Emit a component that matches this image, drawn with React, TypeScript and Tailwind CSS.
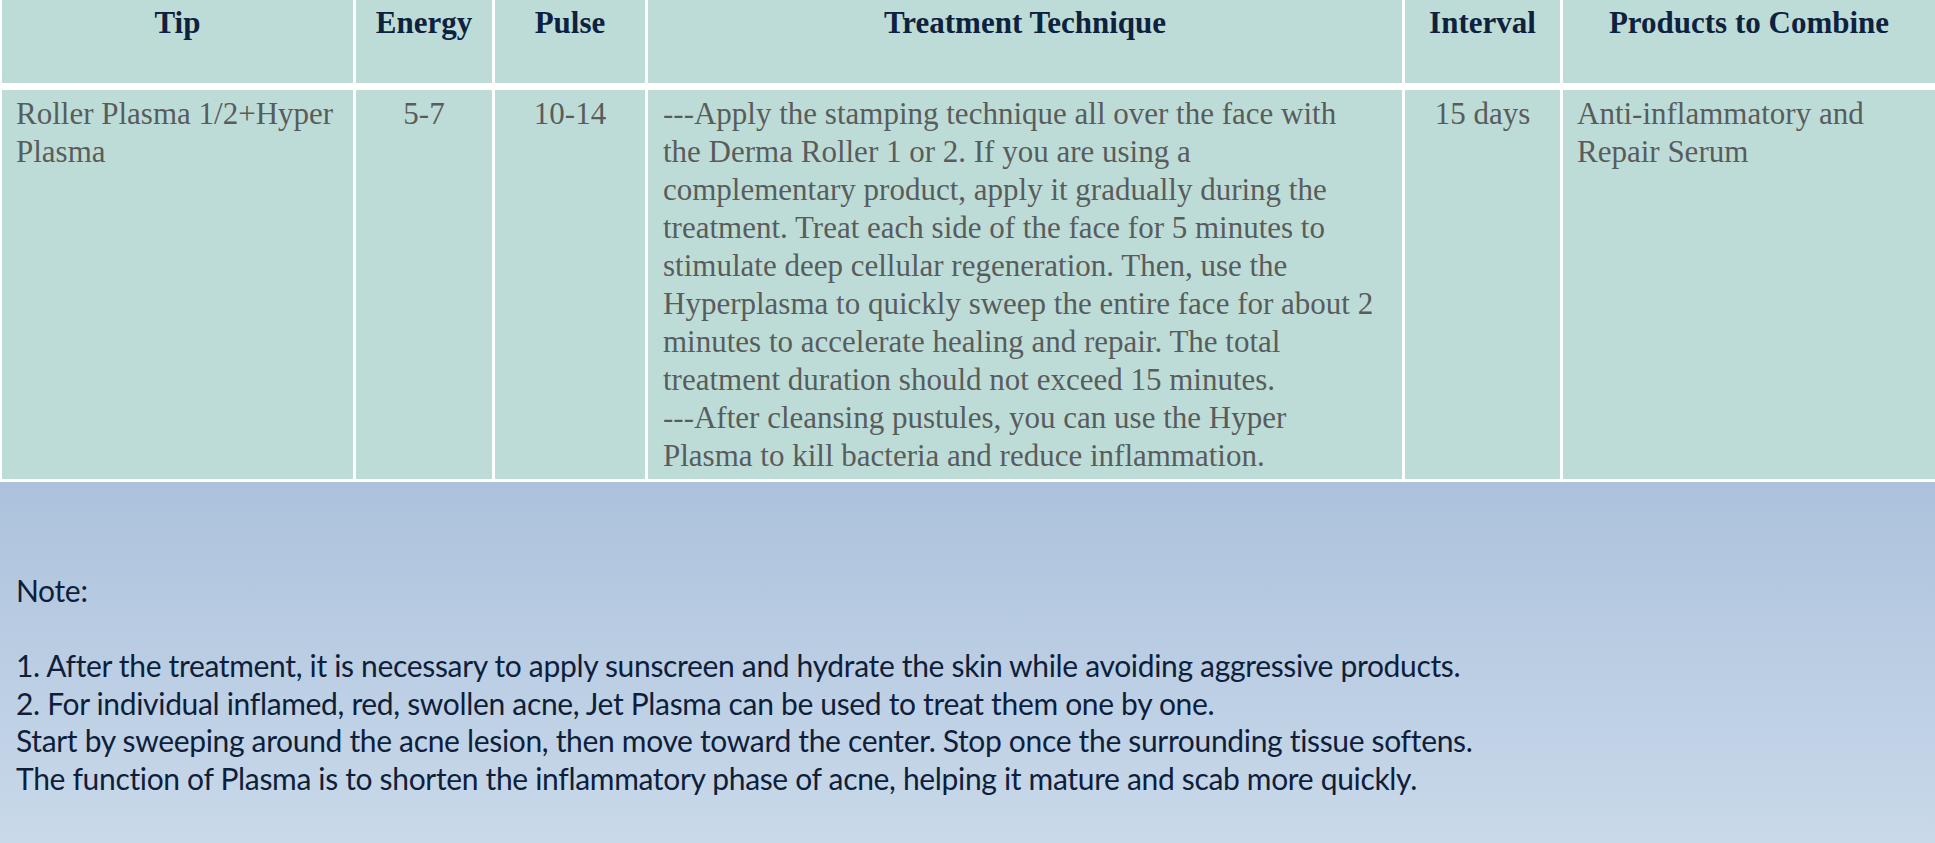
const headers = ['Tip', 'Energy', 'Pulse', 'Treatment Technique', 'Interval', 'Products to Combine']

// line breaks follow the original layout
const technique = [
  '---Apply the stamping technique all over the face with',
  'the Derma Roller 1 or 2. If you are using a',
  'complementary product, apply it gradually during the',
  'treatment. Treat each side of the face for 5 minutes to',
  'stimulate deep cellular regeneration. Then, use the',
  'Hyperplasma to quickly sweep the entire face for about 2',
  'minutes to accelerate healing and repair. The total',
  'treatment duration should not exceed 15 minutes.',
  '---After cleansing pustules, you can use the Hyper',
  'Plasma to kill bacteria and reduce inflammation.',
]

const notes = [
  '1. After the treatment, it is necessary to apply sunscreen and hydrate the skin while avoiding aggressive products.',
  '2. For individual inflamed, red, swollen acne, Jet Plasma can be used to treat them one by one.',
  'Start by sweeping around the acne lesion, then move toward the center. Stop once the surrounding tissue softens.',
  'The function of Plasma is to shorten the inflammatory phase of acne, helping it mature and scab more quickly.',
]

const cols = 'grid grid-cols-[351px_136px_150px_754px_155px_1fr] gap-x-[3px]'

export default function App() {
  return (
    <div className="w-[1935px] h-[843px] overflow-hidden flex flex-col bg-white">
      {/* Table */}
      <div className="pl-[2px] flex flex-col gap-y-[7px] pb-[3px] bg-white font-['Liberation_Serif',serif] text-[31px] leading-[38px]">
        <div className={`${cols} h-[83px]`}>
          {headers.map((h) => (
            <div key={h} className="bg-[#bedcd7] pt-[4px] text-center font-bold text-[#0e2240]">
              {h}
            </div>
          ))}
        </div>
        <div className={`${cols} h-[389px] text-[#595c5c]`}>
          <div className="bg-[#bedcd7] pl-[14px] pr-[10px] pt-[5px]">Roller Plasma 1/2+Hyper Plasma</div>
          <div className="bg-[#bedcd7] pt-[5px] text-center">5-7</div>
          <div className="bg-[#bedcd7] pt-[5px] text-center">10-14</div>
          <div className="bg-[#bedcd7] pl-[15px] pr-[14px] pt-[5px]">
            {technique.map((t, i) => (
              <div key={i} className="whitespace-nowrap">{t}</div>
            ))}
          </div>
          <div className="bg-[#bedcd7] pt-[5px] text-center">15 days</div>
          <div className="bg-[#bedcd7] pl-[14px] pr-[10px] pt-[5px]">Anti-inflammatory and Repair Serum</div>
        </div>
      </div>

      {/* Notes */}
      <div className="flex-1 bg-gradient-to-b from-[#acc2dc] to-[#c9d9ea] pl-[16px] pt-[90px] font-['Lato',sans-serif] text-[30px] tracking-[-0.33px] leading-[37.6px] text-[#0f1e3a]">
        <p>Note:</p>
        <p className="h-[37.6px]"></p>
        {notes.map((n) => (
          <p key={n}>{n}</p>
        ))}
      </div>
    </div>
  )
}
